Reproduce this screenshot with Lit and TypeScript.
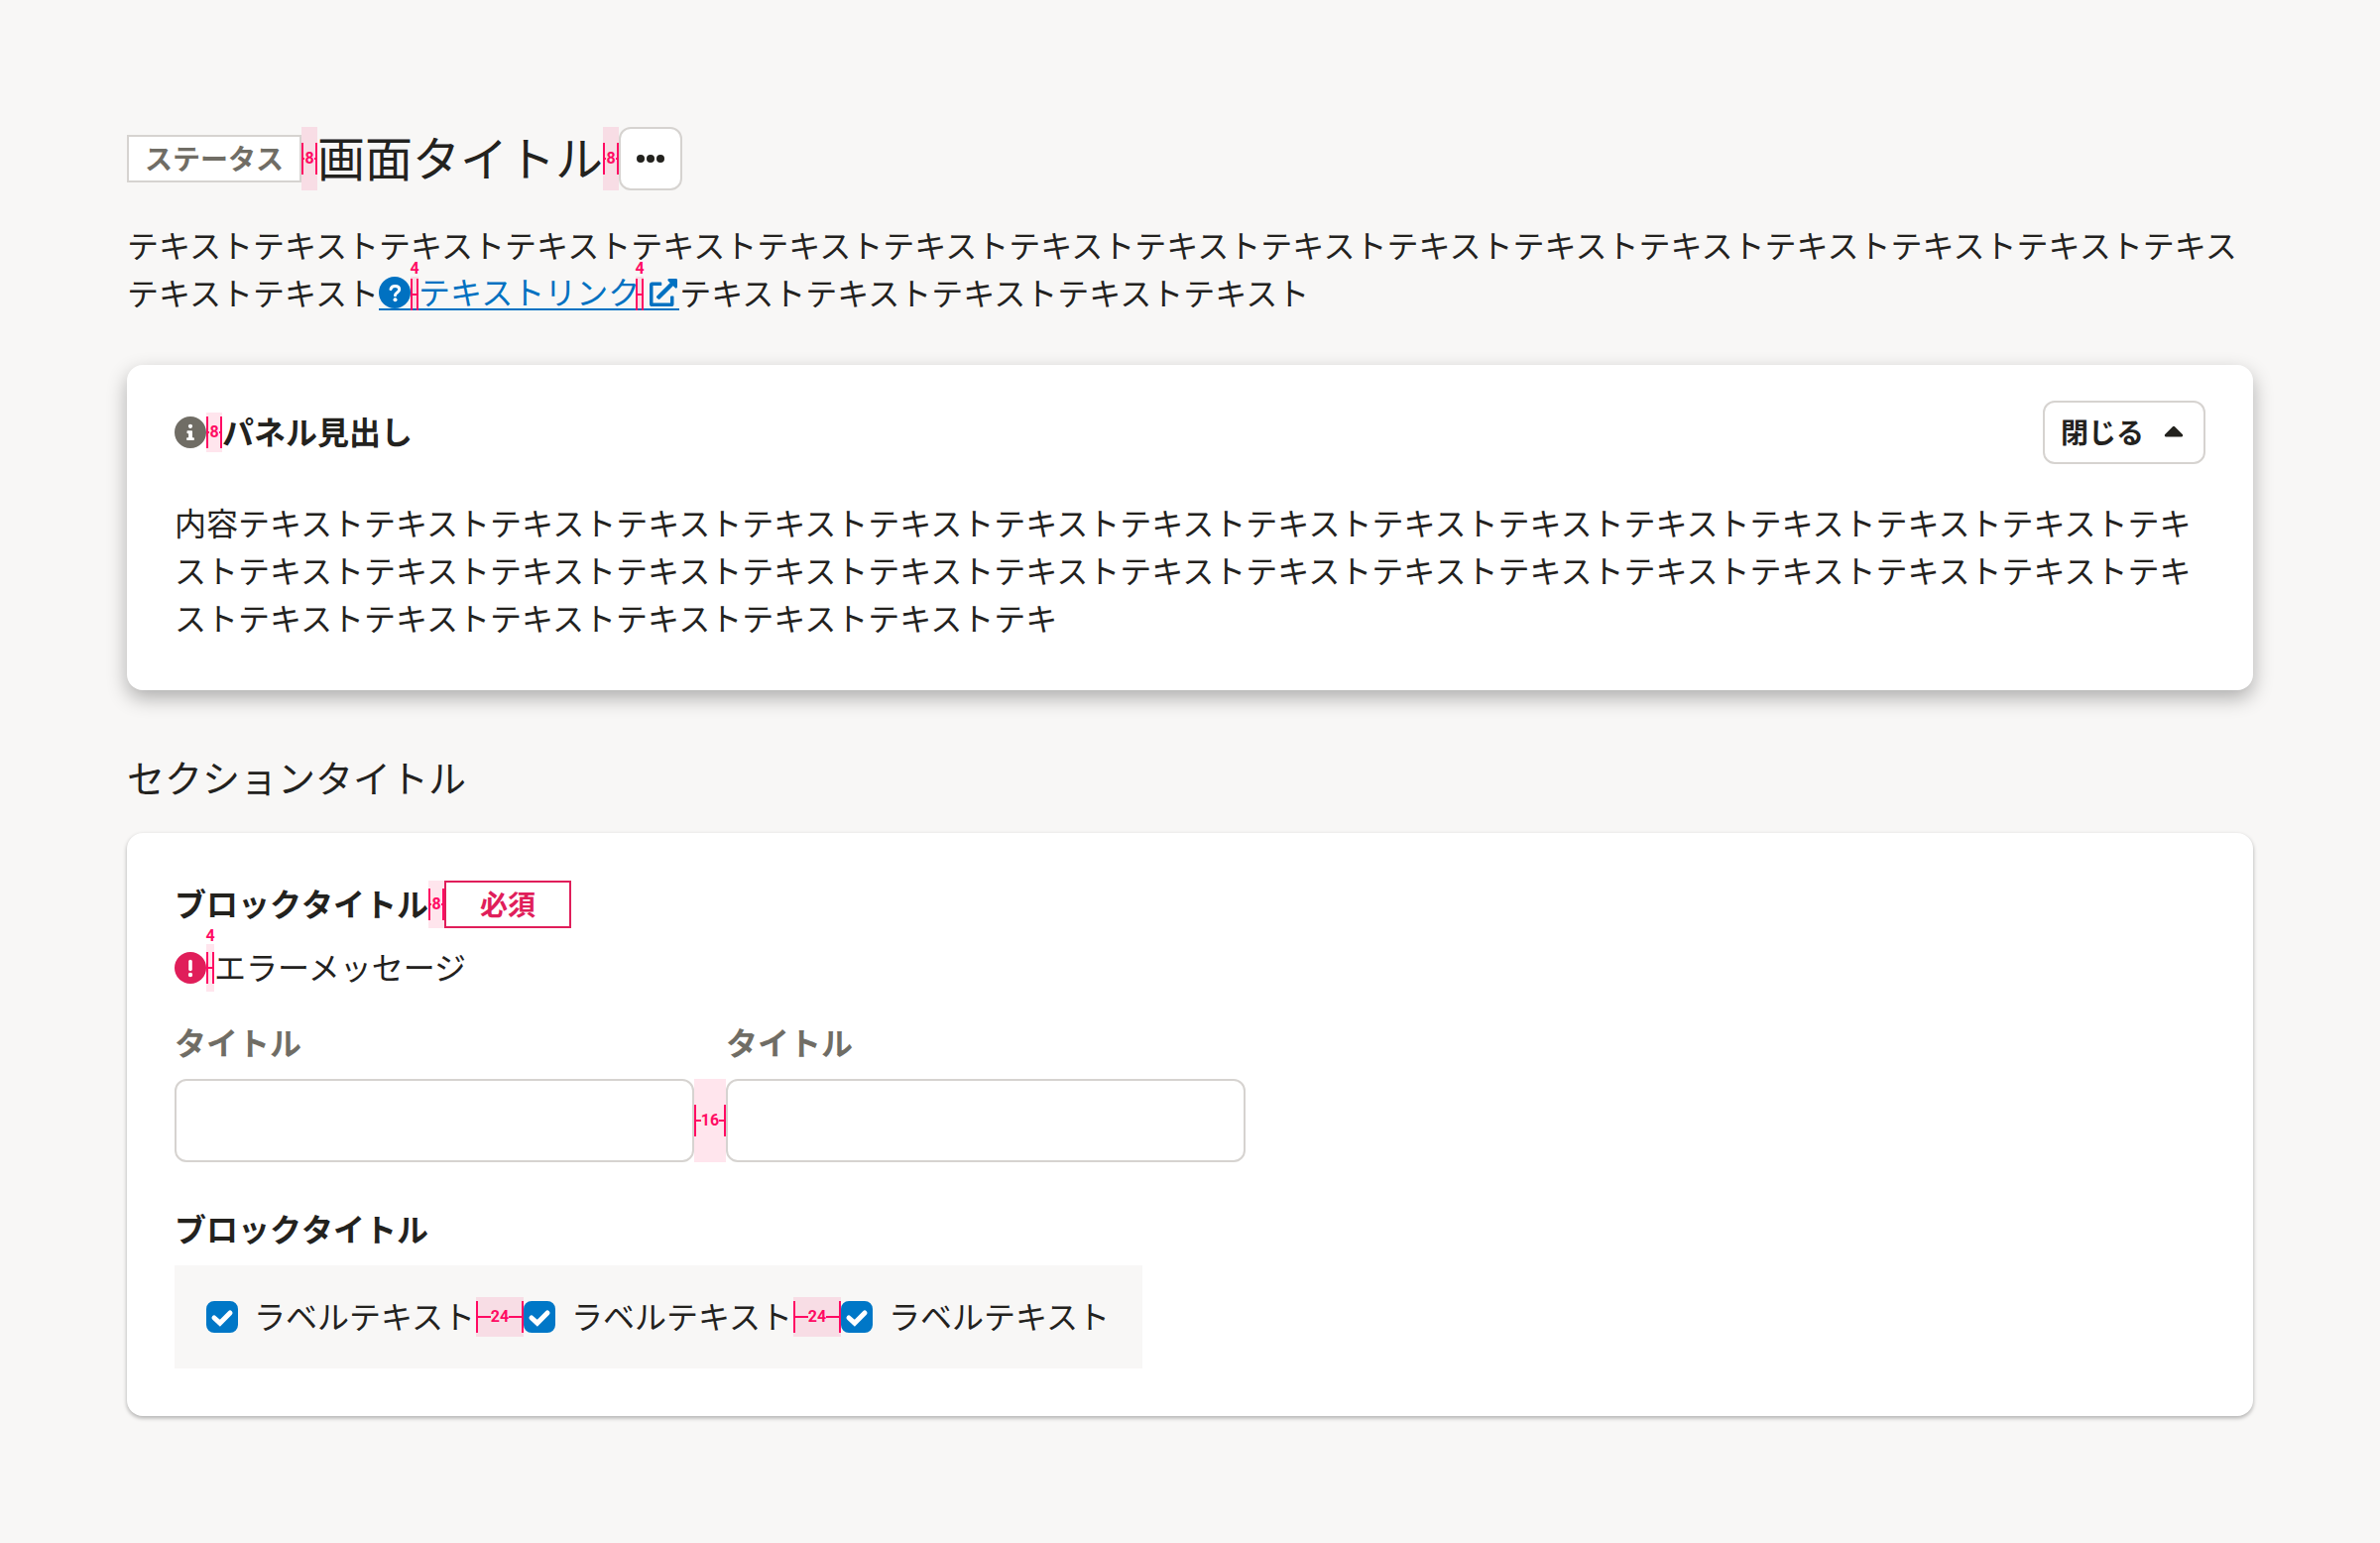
import { LitElement, html, css, svg } from "lit";
import { customElement, property } from "lit/decorators.js";

const repeat = (n: number) => "テキスト".repeat(n);

@customElement("gap-mark")
class GapMark extends LitElement {
  @property() value = "8";

  static styles = css`
    :host {
      display: inline-flex;
      flex: none;
      align-items: center;
      position: relative;
      background: rgba(255, 0, 80, 0.1);
      width: 16px;
      height: 64px;
    }
    :host([value="4"]) {
      width: 8px;
    }
    :host([value="16"]) {
      width: 32px;
    }
    :host([value="24"]) {
      width: 48px;
    }
    .rule {
      display: flex;
      align-items: center;
      box-sizing: border-box;
      width: 100%;
      height: 32px;
      border: solid #ff0b63;
      border-width: 0 2px;
    }
    .dash {
      flex: 1;
      height: 2px;
      background: #ff0b63;
    }
    .num {
      color: #ff0b63;
      font: 700 16px/16px Roboto, sans-serif;
    }
    .above {
      position: absolute;
      left: 0;
      right: 0;
      bottom: 100%;
      display: flex;
      justify-content: center;
    }
  `;

  render() {
    return this.value === "4"
      ? html`<span class="rule"><span class="dash"></span></span><span class="num above">4</span>`
      : html`<span class="rule"
          ><span class="dash"></span><span class="num">${this.value}</span><span class="dash"></span
        ></span>`;
  }
}

const question = svg`<svg class="icon" viewBox="0 0 32 32" aria-hidden="true"><circle cx="16" cy="16" r="16" fill="currentColor"/><path d="M12 12.600c.500-2 2-3.100 4.300-3.100 2.600 0 4.400 1.400 4.400 3.600 0 2.900-4.200 3-4.200 5.700" fill="none" stroke="#fff" stroke-width="3" stroke-linecap="round"/><circle cx="16.500" cy="23.200" r="2" fill="#fff"/></svg>`;

const external = svg`<svg class="icon external" viewBox="0 0 512 512" aria-hidden="true"><path fill="currentColor" d="M432 320h-32a16 16 0 0 0-16 16v112H64V128h144a16 16 0 0 0 16-16V80a16 16 0 0 0-16-16H48a48 48 0 0 0-48 48v352a48 48 0 0 0 48 48h352a48 48 0 0 0 48-48V336a16 16 0 0 0-16-16zM488 0H360c-21.400 0-32 25.900-17 41l35.700 35.700L135 320.400a24 24 0 0 0 0 34L157.700 377a24 24 0 0 0 34 0L435.300 133.300 471 169c15 15 41 4.500 41-17V24a24 24 0 0 0-24-24z"/></svg>`;

const info = svg`<svg class="icon info" viewBox="0 0 512 512" aria-hidden="true"><path fill="currentColor" d="M256 0C115 0 0 115 0 256s115 256 256 256 256-115 256-256S397 0 256 0zm0 122c19 0 34 15 34 34s-15 34-34 34-34-15-34-34 15-34 34-34zm62 250c0 7-5 12-12 12H206c-7 0-12-5-12-12v-22c0-7 5-12 12-12h20v-64h-14c-7 0-12-5-12-12v-22c0-7 5-12 12-12h64c7 0 12 5 12 12v98h18c7 0 12 5 12 12z"/></svg>`;

const alert = svg`<svg class="icon alert" viewBox="0 0 32 32" aria-hidden="true"><circle cx="16" cy="16" r="16" fill="currentColor"/><path d="M16 9.500v8" stroke="#fff" stroke-width="3.600" stroke-linecap="round"/><circle cx="16" cy="23" r="2.200" fill="#fff"/></svg>`;

const dots = svg`<svg class="glyph" viewBox="0 0 28 28" aria-hidden="true"><circle cx="4" cy="14" r="4"/><circle cx="14" cy="14" r="4"/><circle cx="24" cy="14" r="4"/></svg>`;

const caret = svg`<svg class="glyph" viewBox="0 0 28 28" aria-hidden="true"><path d="M6.200 18.500h15.600c1.400 0 1.900-1.500 1-2.400l-7.500-7.700a1.800 1.800 0 0 0-2.600 0l-7.500 7.700c-.900.900-.400 2.400 1 2.400z"/></svg>`;

@customElement("app-root")
class AppRoot extends LitElement {
  static styles = css`
    :host {
      display: block;
      box-sizing: border-box;
      min-height: 100vh;
      padding: 128px;
      background: #f8f7f6;
      color: #23221e;
      font: 400 32px/48px "Noto Sans", "Noto Sans CJK JP", sans-serif;
    }
    h1,
    h2,
    h3,
    p {
      margin: 0;
      font: inherit;
    }
    .row {
      display: flex;
      align-items: center;
    }
    .badge {
      box-sizing: border-box;
      height: 48px;
      padding: 0 16px;
      border: 2px solid #d6d3d0;
      background: #fff;
      color: #706d65;
      font-size: 28px;
      font-weight: 700;
      line-height: 44px;
      font-kerning: none;
    }
    .required {
      padding: 0 34px;
      border-color: #e01e5a;
      color: #e01e5a;
    }
    .title {
      font-size: 48px;
      line-height: 64px;
      font-kerning: none;
    }
    button {
      display: flex;
      align-items: center;
      gap: 16px;
      box-sizing: border-box;
      height: 64px;
      padding: 0 16px;
      border: 2px solid #d6d3d0;
      border-radius: 12px;
      background: #fff;
      color: inherit;
      font: 700 28px/28px "Noto Sans", "Noto Sans CJK JP", sans-serif;
      font-kerning: none;
    }
    .glyph {
      display: block;
      width: 28px;
      height: 28px;
      fill: currentColor;
    }
    .lead {
      margin-top: 32px;
    }
    a {
      display: inline-flex;
      align-items: center;
      box-sizing: border-box;
      height: 34px;
      margin: 7px 0;
      border-bottom: 2px solid #0071c1;
      color: #0071c1;
      line-height: 32px;
      text-decoration: none;
      vertical-align: top;
    }
    .icon {
      display: block;
      flex: none;
      width: 32px;
      height: 32px;
    }
    .external {
      box-sizing: border-box;
      padding: 2px;
    }
    a gap-mark {
      align-self: flex-start;
      align-items: flex-end;
      height: 34px;
    }
    a span + gap-mark {
      margin: 0 4px 0 -4px;
    }
    .panel,
    .card {
      border-radius: 16px;
      background: #fff;
    }
    .panel {
      margin-top: 48px;
      padding: 36px 48px 48px;
      box-shadow: 0 8px 20px rgba(3, 3, 2, 0.3);
    }
    .panel-head {
      justify-content: space-between;
      margin-bottom: 36px;
    }
    .info {
      color: #706d65;
    }
    .panel-head gap-mark,
    .checks gap-mark {
      height: 40px;
    }
    .strong {
      font-weight: 700;
      line-height: 40px;
      font-kerning: none;
    }
    .section {
      margin: 64px 0 32px;
      font-size: 38px;
    }
    .card {
      padding: 48px;
      box-shadow: 0 2px 4px rgba(3, 3, 2, 0.3);
    }
    .card .heading gap-mark,
    .error gap-mark {
      height: 48px;
    }
    .error {
      margin-top: 16px;
    }
    .alert {
      color: #e01e5a;
    }
    .fields {
      margin-top: 32px;
      align-items: flex-end;
    }
    .field {
      display: flex;
      flex-direction: column;
      gap: 16px;
      flex: 0 1 524px;
    }
    .field label {
      color: #706d65;
    }
    .field input {
      box-sizing: border-box;
      width: 100%;
      height: 84px;
      padding: 0 16px;
      border: 2px solid #d6d3d0;
      border-radius: 12px;
      background: #fff;
      font: inherit;
    }
    .fields gap-mark {
      height: 84px;
    }
    .second {
      margin-top: 48px;
    }
    .checks {
      width: fit-content;
      margin-top: 16px;
      padding: 32px;
      background: #f8f7f6;
    }
    .check {
      display: flex;
      align-items: center;
      gap: 16px;
      line-height: 40px;
    }
    .check span {
      min-width: 224px;
    }
    .check input {
      appearance: none;
      width: 32px;
      height: 32px;
      margin: 0;
      border: 2px solid #d6d3d0;
      border-radius: 8px;
      background: #fff;
    }
    .box {
      display: grid;
    }
    .box > * {
      grid-area: 1 / 1;
    }
    .check input:checked {
      border-color: #0077c7;
      background: #0077c7;
    }
    .tick {
      width: 32px;
      height: 32px;
      pointer-events: none;
      fill: none;
      stroke: #fff;
      stroke-width: 5;
      stroke-linecap: round;
    }
  `;

  private field(id: string) {
    return html`<div class="field">
      <label class="strong" for=${id}>タイトル</label>
      <input id=${id} type="text" />
    </div>`;
  }

  private check() {
    return html`<label class="check">
      <div class="box">
        <input type="checkbox" checked />
        <svg class="tick" viewBox="0 0 32 32" aria-hidden="true"><path d="M8 17l5.800 5.200L24 12" /></svg>
      </div>
      <span>ラベルテキスト</span>
    </label>`;
  }

  render() {
    return html`
      <header class="row">
        <span class="badge">ステータス</span><gap-mark value="8"></gap-mark>
        <h1 class="title">画面タイトル</h1>
        <gap-mark value="8"></gap-mark>
        <button type="button" aria-label="メニュー">${dots}</button>
      </header>
      <p class="lead">
        ${repeat(16)}テキス<br />${repeat(2)}<a href="#"
          >${question}<gap-mark value="4"></gap-mark><span>テキストリンク</span
          ><gap-mark value="4"></gap-mark>${external}</a
        >${repeat(5)}
      </p>
      <section class="panel">
        <div class="row panel-head">
          <div class="row">
            ${info}<gap-mark value="8"></gap-mark>
            <h2 class="strong">パネル見出し</h2>
          </div>
          <button type="button">閉じる${caret}</button>
        </div>
        <p>内容${repeat(38)}テキ</p>
      </section>
      <h2 class="section">セクションタイトル</h2>
      <section class="card">
        <div class="row heading">
          <h3 class="strong">ブロックタイトル</h3>
          <gap-mark value="8"></gap-mark>
          <span class="badge required">必須</span>
        </div>
        <div class="row error">
          ${alert}<gap-mark value="4"></gap-mark><span>エラーメッセージ</span>
        </div>
        <div class="row fields">
          ${this.field("first")}<gap-mark value="16"></gap-mark>${this.field("second")}
        </div>
        <h3 class="strong second">ブロックタイトル</h3>
        <div class="row checks">
          ${this.check()}<gap-mark value="24"></gap-mark>${this.check()}<gap-mark value="24"></gap-mark
          >${this.check()}
        </div>
      </section>
    `;
  }
}
